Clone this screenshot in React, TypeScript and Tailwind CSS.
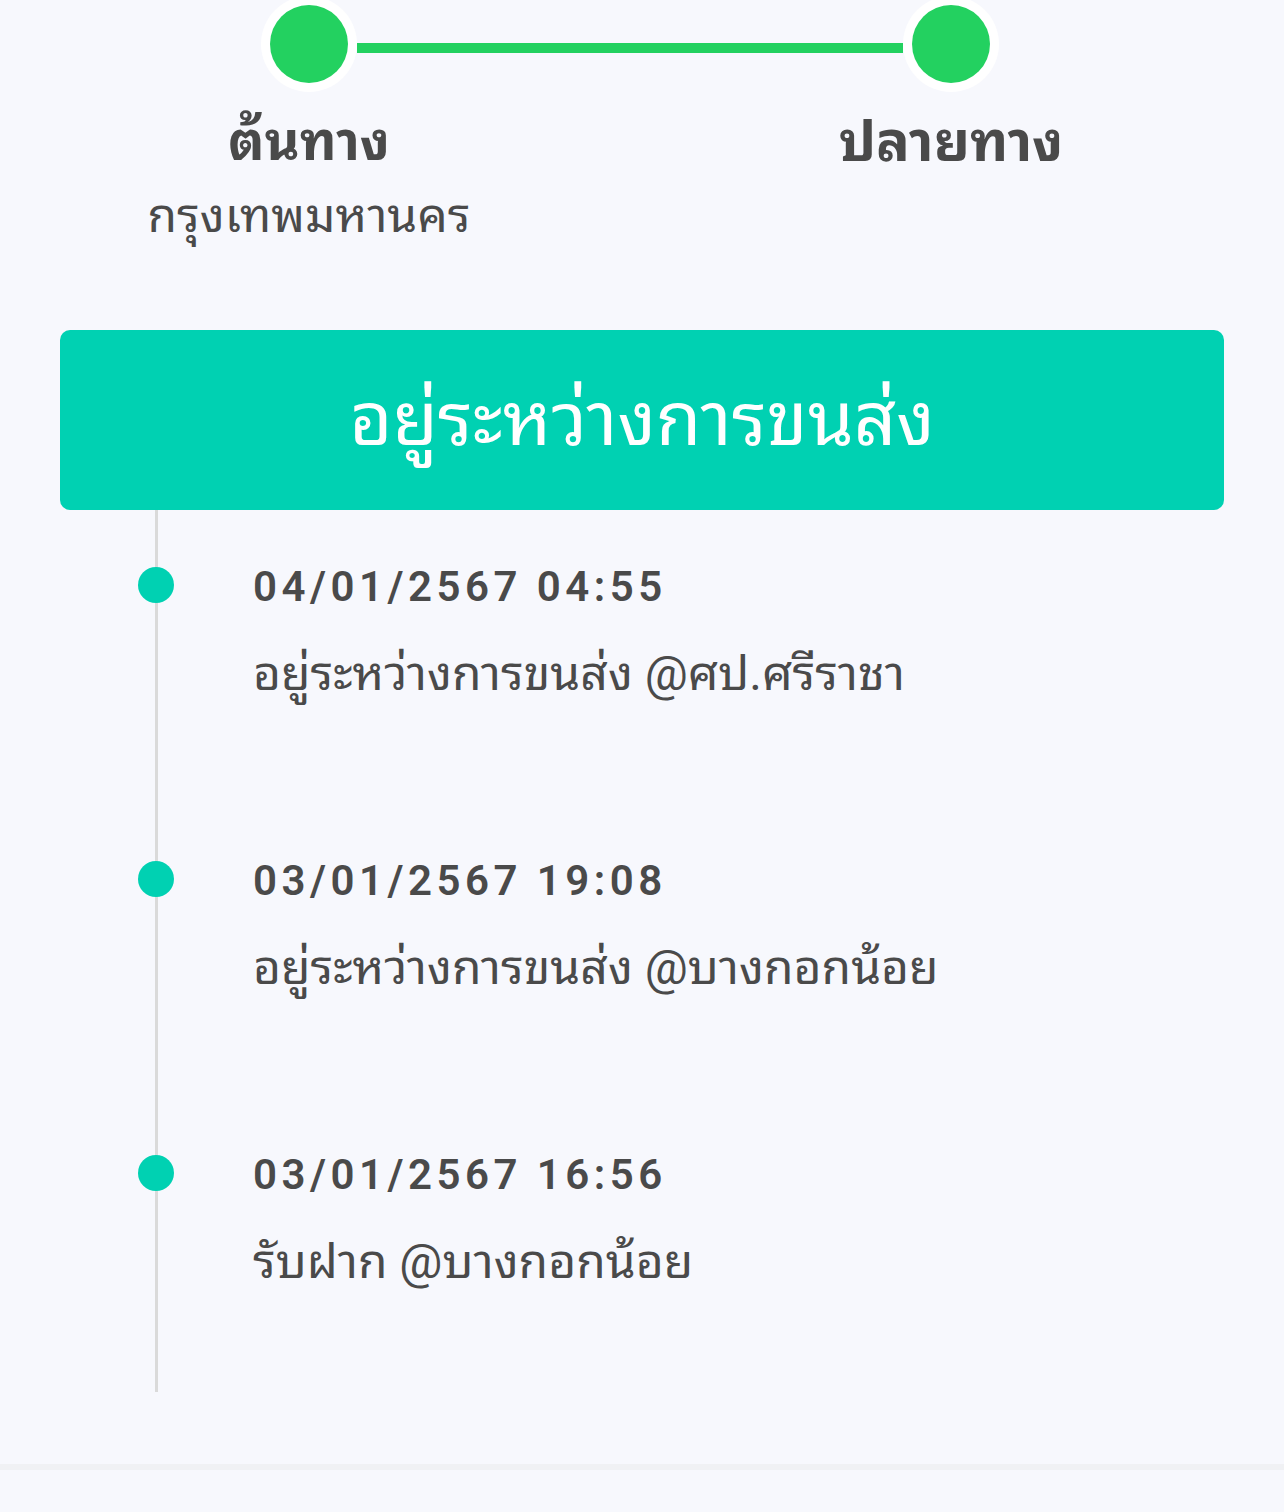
import React from "react";

const items = [
  { date: "04/01/2567 04:55", text: "อยู่ระหว่างการขนส่ง @ศป.ศรีราชา" },
  { date: "03/01/2567 19:08", text: "อยู่ระหว่างการขนส่ง @บางกอกน้อย" },
  { date: "03/01/2567 16:56", text: "รับฝาก @บางกอกน้อย" },
];

export default function App() {
  return (
    <div
      className="min-h-[1512px] w-full bg-[#f7f8fd] text-[#4a4a4a] overflow-hidden"
      style={{ fontFamily: 'Roboto, "Noto Sans Thai Looped", sans-serif' }}
    >
      {/* progress */}
      <div className="flex items-center pl-[261px] -mt-[4px] h-[96px]">
        <div className="w-[96px] h-[96px] rounded-full bg-white flex items-center justify-center shrink-0">
          <div className="w-[78px] h-[78px] rounded-full bg-[#23d160]" />
        </div>
        <div className="w-[546px] h-[10px] bg-[#23d160] mt-[8px]" />
        <div className="w-[96px] h-[96px] rounded-full bg-white flex items-center justify-center shrink-0">
          <div className="w-[78px] h-[78px] rounded-full bg-[#23d160]" />
        </div>
      </div>

      <div className="grid grid-cols-[618px_1fr] mt-[10px] h-[162px]">
        <div className="flex flex-col items-center">
          <div className="text-[54px] font-bold leading-[80px]">ต้นทาง</div>
          <div className="text-[48px] leading-[60px] mt-[4px]">กรุงเทพมหานคร</div>
        </div>
        <div className="flex flex-col items-center">
          <div className="text-[56px] font-bold leading-[80px]">ปลายทาง</div>
        </div>
      </div>

      {/* banner */}
      <div className="mx-[60px] mt-[66px] h-[180px] rounded-[10px] bg-[#00d1b2] flex items-center justify-center">
        <span className="text-white text-[74px] leading-none">อยู่ระหว่างการขนส่ง</span>
      </div>

      {/* timeline */}
      <div className="ml-[155px] border-l-[3px] border-[#dadada] h-[882px] flex flex-col">
        {items.map((it, i) => (
          <div key={i} className="relative h-[294px] pt-[52px] pl-[95px]">
            <div className="absolute left-[-20px] top-[57px] w-[36px] h-[36px] rounded-full bg-[#00d1b2]" />
            <div className="text-[42px] font-semibold tracking-[4.5px] leading-[50px]">{it.date}</div>
            <div className="text-[48px] leading-[60px] mt-[32px]">{it.text}</div>
          </div>
        ))}
      </div>

      <div className="mt-[72px] h-[6px] bg-[#f0f1f4]" />
    </div>
  );
}
